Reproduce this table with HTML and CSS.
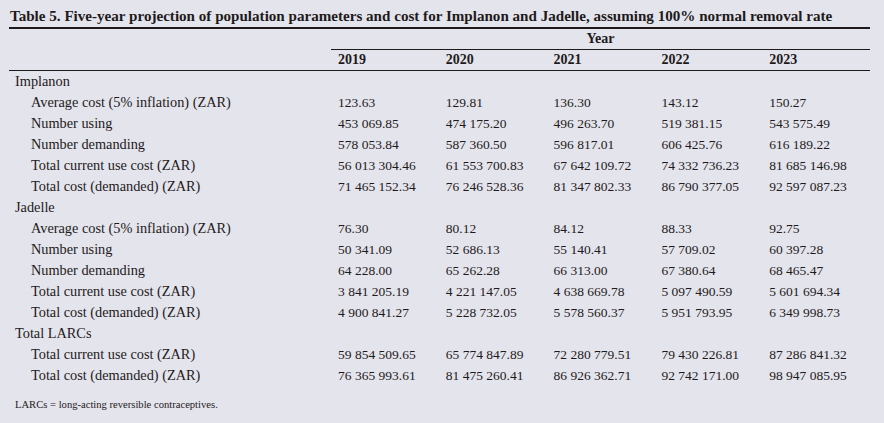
FILE: index.html
```html
<!DOCTYPE html>
<html>
<head>
<meta charset="utf-8">
<link rel="stylesheet" href="styles.css">
</head>
<body>
<div class="page">
  <h1 class="title">Table 5. Five-year projection of population parameters and cost for Implanon and Jadelle, assuming 100% normal removal rate</h1>
  <table class="data">
    <colgroup>
      <col class="c-label">
      <col class="c-num"><col class="c-num"><col class="c-num"><col class="c-num"><col class="c-num">
    </colgroup>
    <thead>
      <tr class="h-year">
        <th></th>
        <th colspan="5" class="year">Year</th>
      </tr>
      <tr class="h-years">
        <th></th>
        <th>2019</th><th>2020</th><th>2021</th><th>2022</th><th>2023</th>
      </tr>
    </thead>
    <tbody>
      <tr class="group"><td>Implanon</td><td></td><td></td><td></td><td></td><td></td></tr>
      <tr><td class="sub">Average cost (5% inflation) (ZAR)</td><td>123.63</td><td>129.81</td><td>136.30</td><td>143.12</td><td>150.27</td></tr>
      <tr><td class="sub">Number using</td><td>453 069.85</td><td>474 175.20</td><td>496 263.70</td><td>519 381.15</td><td>543 575.49</td></tr>
      <tr><td class="sub">Number demanding</td><td>578 053.84</td><td>587 360.50</td><td>596 817.01</td><td>606 425.76</td><td>616 189.22</td></tr>
      <tr><td class="sub">Total current use cost (ZAR)</td><td>56 013 304.46</td><td>61 553 700.83</td><td>67 642 109.72</td><td>74 332 736.23</td><td>81 685 146.98</td></tr>
      <tr><td class="sub">Total cost (demanded) (ZAR)</td><td>71 465 152.34</td><td>76 246 528.36</td><td>81 347 802.33</td><td>86 790 377.05</td><td>92 597 087.23</td></tr>
      <tr class="group"><td>Jadelle</td><td></td><td></td><td></td><td></td><td></td></tr>
      <tr><td class="sub">Average cost (5% inflation) (ZAR)</td><td>76.30</td><td>80.12</td><td>84.12</td><td>88.33</td><td>92.75</td></tr>
      <tr><td class="sub">Number using</td><td>50 341.09</td><td>52 686.13</td><td>55 140.41</td><td>57 709.02</td><td>60 397.28</td></tr>
      <tr><td class="sub">Number demanding</td><td>64 228.00</td><td>65 262.28</td><td>66 313.00</td><td>67 380.64</td><td>68 465.47</td></tr>
      <tr><td class="sub">Total current use cost (ZAR)</td><td>3 841 205.19</td><td>4 221 147.05</td><td>4 638 669.78</td><td>5 097 490.59</td><td>5 601 694.34</td></tr>
      <tr><td class="sub">Total cost (demanded) (ZAR)</td><td>4 900 841.27</td><td>5 228 732.05</td><td>5 578 560.37</td><td>5 951 793.95</td><td>6 349 998.73</td></tr>
      <tr class="group"><td>Total LARCs</td><td></td><td></td><td></td><td></td><td></td></tr>
      <tr><td class="sub">Total current use cost (ZAR)</td><td>59 854 509.65</td><td>65 774 847.89</td><td>72 280 779.51</td><td>79 430 226.81</td><td>87 286 841.32</td></tr>
      <tr><td class="sub">Total cost (demanded) (ZAR)</td><td>76 365 993.61</td><td>81 475 260.41</td><td>86 926 362.71</td><td>92 742 171.00</td><td>98 947 085.95</td></tr>
    </tbody>
  </table>
  <p class="note">LARCs = long-acting reversible contraceptives.</p>
</div>
</body>
</html>
```

FILE: styles.css
```css
html, body {
  margin: 0;
  padding: 0;
  background: #e4e4ec;
}
body {
  width: 884px;
  height: 423px;
  overflow: hidden;
  font-family: "Liberation Serif", "Times New Roman", serif;
  color: #1e1a1b;
}
.page {
  padding: 0 14px 0 9px;
}
.title {
  margin: 0;
  padding: 7px 0 0 1px;
  height: 20px;
  font-size: 15.1px;
  line-height: 18px;
  font-weight: bold;
  white-space: nowrap;
  border-bottom: 2px solid #1e1a1b;
}
.data {
  width: 861px;
  border-collapse: collapse;
  table-layout: fixed;
  font-size: 13.5px;
}
.c-label { width: 322px; }
.c-num { width: 107.8px; }
.data th, .data td {
  padding: 0 0 0 7px;
  text-align: left;
  white-space: nowrap;
  height: 20px;
  line-height: 20px;
}
.data th {
  font-weight: bold;
  font-size: 14px;
}
.h-year th.year {
  text-align: center;
  padding: 0;
  border-bottom: 1px solid #1e1a1b;
}
.h-years th {
  border-bottom: 1px solid #1e1a1b;
}
.data tbody td { height: 21px; line-height: 21px; }
.group td:first-child {
  padding-left: 6px;
  font-size: 14.3px;
}
.data td.sub {
  padding-left: 22px;
  font-size: 14.3px;
}
.note {
  margin: 13px 0 0 6px;
  font-size: 10.6px;
  line-height: 12px;
}
```
